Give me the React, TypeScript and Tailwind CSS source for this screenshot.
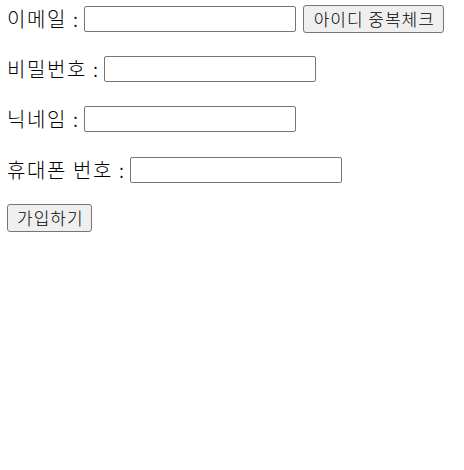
import React from "react";

const font = { fontFamily: '"Noto Sans CJK KR", sans-serif' };

function Field({ label, children }: { label: string; children?: React.ReactNode }) {
  return (
    <div className="flex items-center h-[28px]">
      <span className="text-[20px] leading-[28px] text-black mr-[4px] whitespace-pre font-light tracking-[1.6px]">{label}</span>
      <input
        type="text"
        className="w-[212px] h-[26px] border border-[#767676] rounded-[2px] bg-white outline-none px-[2px] text-[13px]"
      />
      {children}
    </div>
  );
}

export default function App() {
  return (
    <div className="w-[464px] h-[470px] bg-white pl-[7px] pt-[5px] flex flex-col items-start" style={font}>
      <Field label="이메일 :">
        <button className="ml-[7px] h-[28px] pl-[10px] pr-[8px] bg-[#efefef] border border-[#767676] rounded-[3px] text-[17px] leading-[26px] text-black font-light tracking-[1px]">
          아이디 중복체크
        </button>
      </Field>
      <div className="mt-[22px]">
        <Field label="비밀번호 :" />
      </div>
      <div className="mt-[22px]">
        <Field label="닉네임 :" />
      </div>
      <div className="mt-[23px]">
        <Field label="휴대폰 번호 :" />
      </div>
      <button className="mt-[20px] h-[28px] pl-[9px] pr-[7px] bg-[#efefef] border border-[#767676] rounded-[3px] text-[17px] leading-[26px] text-black font-light tracking-[1px]">
        가입하기
      </button>
    </div>
  );
}
